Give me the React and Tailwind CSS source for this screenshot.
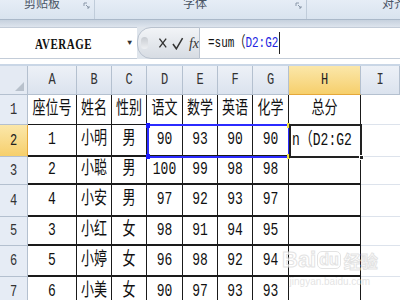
import React from 'react'

const cols = ['A', 'B', 'C', 'D', 'E', 'F', 'G', 'H', 'I']
const rowHeights = ['h-[30px]', 'h-[32px]', 'h-[28px]', 'h-[32px]', 'h-[29px]', 'h-[31px]', 'h-[31px]']

const data = [
  ['座位号', '姓名', '性别', '语文', '数学', '英语', '化学', '总分'],
  ['1', '小明', '男', '90', '93', '90', '90', ''],
  ['2', '小聪', '男', '100', '99', '98', '98', ''],
  ['4', '小安', '男', '97', '92', '93', '97', ''],
  ['3', '小红', '女', '98', '91', '94', '95', ''],
  ['5', '小婷', '女', '96', '98', '92', '94', ''],
  ['6', '小美', '女', '90', '97', '93', '93', ''],
]

const Tall = ({ children }) => <span className="inline-block scale-y-140 whitespace-nowrap">{children}</span>

const Launcher = () => (
  <svg width="7" height="7" viewBox="0 0 7 7" className="mt-[2px]">
    <path d="M1 1h3M1 1v3M3 3l3 3M6 4v2H4" stroke="#8a97a8" strokeWidth="1" fill="none" />
  </svg>
)

const App = () => {
  return (
    <div className="relative w-[400px] h-[300px] overflow-hidden bg-white font-['Liberation_Mono','Noto_Sans_CJK_SC',monospace] text-[#111]">
      {/* ribbon group labels */}
      <div className="flex h-[20px] bg-gradient-to-b from-[#e6edf6] to-[#d9e3ef] border-b border-[#aab8c9] text-[12px] text-[#4a5565] font-['Noto_Sans_CJK_SC',sans-serif] overflow-hidden">
        <div className="w-[95px] flex justify-between items-start pl-[24px] pr-[4px] border-r border-[#c0ccda]">
          <span className="-mt-[6px]">剪贴板</span>
          <Launcher />
        </div>
        <div className="w-[212px] flex justify-between items-start pl-[88px] pr-[4px] border-r border-[#c0ccda]">
          <span className="-mt-[6px]">字体</span>
          <Launcher />
        </div>
        <div className="flex-1 flex justify-end items-start">
          <span className="-mt-[6px] -mr-[6px]">对齐</span>
        </div>
      </div>
      <div className="h-[7px] bg-gradient-to-b from-[#c6d1de] to-[#dde4ed]" />

      {/* formula bar */}
      <div className="flex h-[32px] bg-[#dfe5ec]">
        <div className="w-[137px] bg-white flex items-center border-y border-[#c3ccd8]">
          <span className="flex-1 text-center text-[11px] font-['Liberation_Serif',serif] font-bold tracking-[0.5px]"><Tall>AVERAGE</Tall></span>
          <span className="text-[8px] text-[#333] pr-[5px]">▼</span>
        </div>
        <div className="w-[63px] flex items-center rounded-l-[14px] bg-gradient-to-b from-[#f2f4f7] to-[#d7dce3] border border-[#b9c2ce]">
          <span className="ml-[3px] w-[7px] h-[12px] rounded-full bg-gradient-to-b from-[#c8ccd2] to-[#eef0f3]" />
          <svg width="10" height="12" viewBox="0 0 10 12" className="ml-[10px]">
            <path d="M1.5 1.5l7 9M8.5 1.5l-7 9" stroke="#333" strokeWidth="1.4" />
          </svg>
          <svg width="12" height="13" viewBox="0 0 12 13" className="ml-[5px]">
            <path d="M1 7l3.5 5L11 1" stroke="#333" strokeWidth="1.6" fill="none" />
          </svg>
          <span className="ml-[5px] text-[14px] italic font-['Liberation_Serif',serif] text-[#333]">fx</span>
        </div>
        <div className="flex-1 bg-white flex items-center border-y border-[#c3ccd8] pl-[8px] text-[11px]">
          <Tall>=sum（<span className="text-[#2424e0]">D2:G2</span></Tall>
          <span className="w-[1px] h-[22px] bg-[#222] ml-[1px]" />
        </div>
      </div>
      <div className="h-[7px] bg-white border-b-[2px] border-[#c9d6e6]" />

      {/* sheet */}
      <div className="grid grid-cols-[28px_49px_35px_35px_36px_35px_35px_36px_72px_1fr]">
        {/* column header */}
        <div className="h-[29px] flex items-end justify-end pr-[3px] pb-[3px] bg-[#e4eaf3] border-r border-b border-[#b4c0cf]">
          <span className="w-0 h-0 border-l-[9px] border-l-transparent border-b-[9px] border-b-[#b8c1cc]" />
        </div>
        {cols.map((c) => (
          <div
            key={c}
            className={
              'h-[29px] flex items-center justify-center text-[12px] border-r border-b border-[#b4c0cf] ' +
              (c === 'H'
                ? 'bg-gradient-to-b from-[#fbe7a9] to-[#f6cf6b] text-[#222] border-b-[#e5a83a]'
                : 'bg-gradient-to-b from-[#edf1f7] to-[#dbe3ee] text-[#333]')
            }
          >
            <Tall>{c}</Tall>
          </div>
        ))}

        {data.map((row, r) => (
          <React.Fragment key={r}>
            <div
              className={
                rowHeights[r] +
                ' flex items-center justify-center text-[12px] border-r border-b border-[#b4c0cf] ' +
                (r === 1
                  ? 'bg-gradient-to-b from-[#fbe7a9] to-[#f6cf6b] text-[#222] border-r-[#e5a83a]'
                  : 'bg-[#e6ecf5] text-[#333]')
              }
            >
              <Tall>{r + 1}</Tall>
            </div>
            {row.map((v, c) => (
              <div
                key={c}
                className={
                  rowHeights[r] +
                  ' flex items-center justify-center text-[13px] border-r border-[#1a1a1a] ' +
                  (r === 0 ? 'border-b' : 'border-b-2')
                }
              >
                <Tall>{v}</Tall>
              </div>
            ))}
            <div className={rowHeights[r] + ' border-b border-[#dde3ec]'} />
          </React.Fragment>
        ))}
      </div>

      {/* selected range D2:G2 */}
      <div className="absolute left-[147px] top-[124px] w-[143px] h-[34px] border-2 border-[#2b2bff]" />
      <span className="absolute left-[146px] top-[123px] w-[4px] h-[5px] bg-[#1a1aff]" />
      <span className="absolute left-[146px] top-[154px] w-[4px] h-[5px] bg-[#1a1aff]" />
      <span className="absolute left-[287px] top-[123px] w-[3px] h-[5px] bg-[#f0e040]" />
      <span className="absolute left-[287px] top-[154px] w-[3px] h-[5px] bg-[#f0e040]" />

      {/* active cell H2 */}
      <div className="absolute left-[289px] top-[124px] w-[73px] h-[34px] border-2 border-[#222] bg-white flex items-center pl-[1px] text-[13px]">
        <Tall>n（D2:G2</Tall>
      </div>
      <span className="absolute left-[359px] top-[155px] w-[5px] h-[5px] bg-[#222] border border-white" />

      {/* watermark */}
      <div className="absolute left-[282px] top-[249px] flex flex-col items-center pointer-events-none font-['Liberation_Sans',sans-serif] opacity-70">
        <div className="flex items-center text-[22px] font-bold leading-none text-white [-webkit-text-stroke:1px_#d8d8d8]">
          <span>Bai</span>
          <span className="ml-[1px] rounded-[5px] border border-[#d8d8d8] px-[1px] text-[16px]">du</span>
          <span className="ml-[3px] text-[17px] font-['Noto_Sans_CJK_SC',sans-serif]">经验</span>
        </div>
        <span className="text-[10px] text-[#d8d8d8] leading-none mt-[6px]">jingyan.baidu.com</span>
      </div>
    </div>
  )
}

export default App
